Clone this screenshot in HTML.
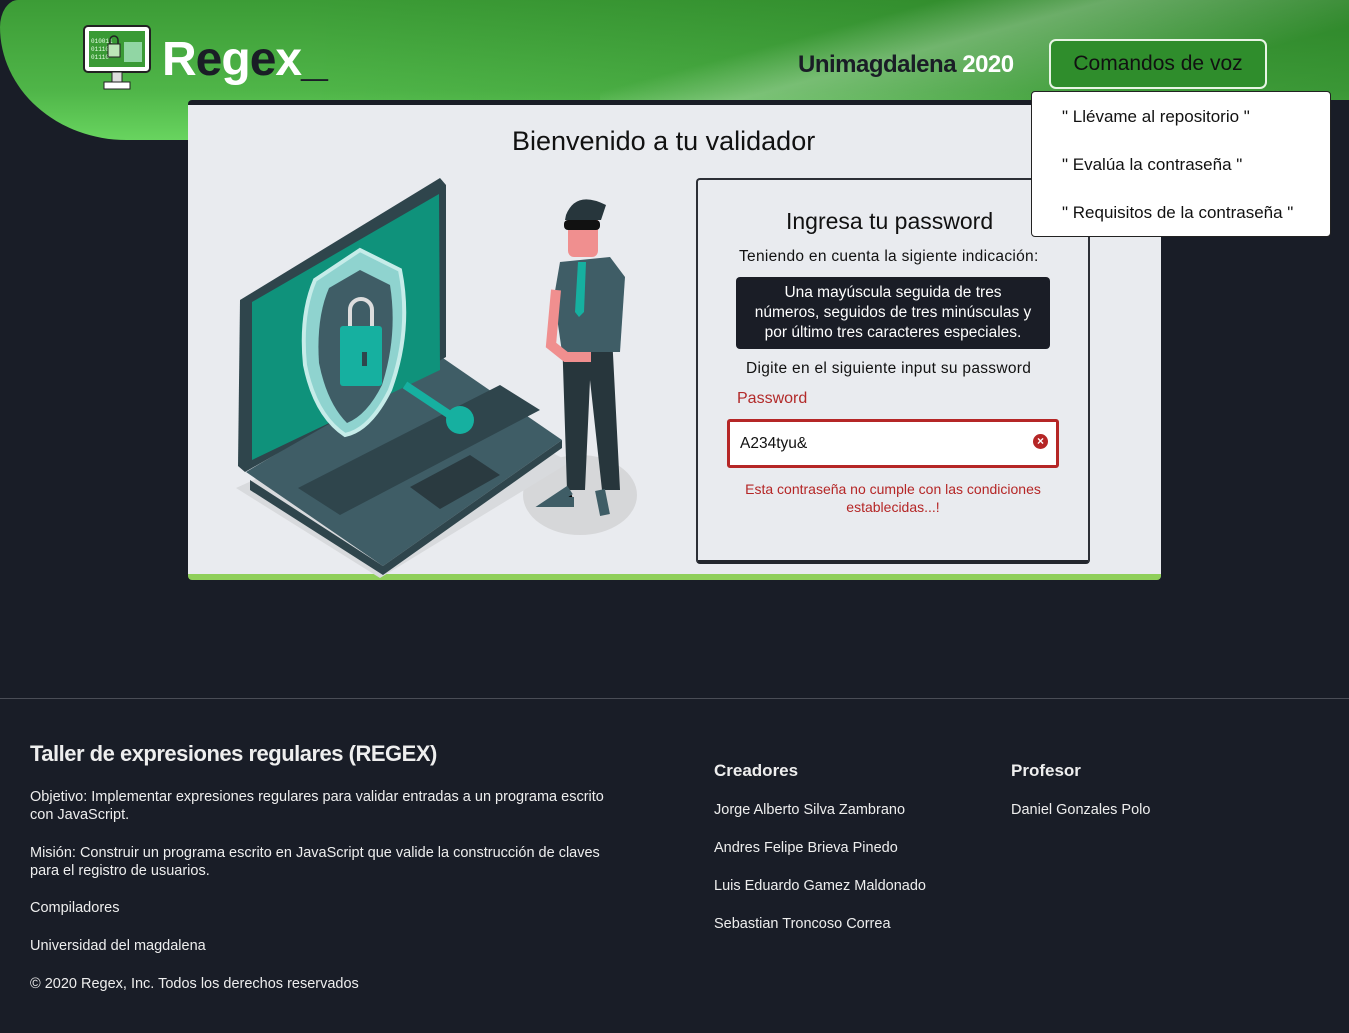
<!DOCTYPE html>
<html><head><meta charset="utf-8"><style>
*{margin:0;padding:0;box-sizing:border-box}
body{width:1349px;height:1033px;background:#191d27;font-family:"Liberation Sans",sans-serif;position:relative;overflow:hidden;color:#222}
.g{background:linear-gradient(90deg,rgba(10,70,10,0) 0,rgba(10,70,10,0) 300px,rgba(10,80,10,.3) 1349px),linear-gradient(180deg,#3c9c36 0,#4fb548 90px,#68d45f 140px);background-attachment:fixed}
.hdr{position:absolute;left:150px;top:0;width:1200px;height:100px}
.hdr2{position:absolute;left:0;top:0;width:420px;height:140px;border-bottom-left-radius:140px 125px;border-top-left-radius:20px 30px}
.streak{position:absolute;left:600px;top:0;width:760px;height:100px;background:linear-gradient(165deg,rgba(255,255,255,0) 30%,rgba(255,255,255,.28) 45%,rgba(255,255,255,0) 75%)}
.t{position:absolute;white-space:nowrap}
.card{position:absolute;left:188px;top:100px;width:973px;height:480px;background:#e9ebef;border-top:5px solid #1a1d26;border-bottom:6px solid #8fcf5a;border-radius:4px}
.inner{position:absolute;left:696px;top:178px;width:394px;height:386px;background:#e9ebef;border:2px solid #2c2f36;border-bottom:4px solid #23262d;border-radius:4px}
.menu{position:absolute;left:1031px;top:91px;width:300px;height:146px;background:#fff;border:1px solid #222;border-radius:4px}
.menu div{position:absolute;left:30px;font-size:17px;color:#111}
.btn{position:absolute;left:1049px;top:39px;width:218px;height:50px;border:2px solid #e8f5e5;border-radius:7px;background:#2f8d2c;font-size:21px;color:#111;text-align:center;line-height:46px}
.foot{position:absolute;left:0;top:698px;width:1349px;height:1px;background:#4a4d56}
.f{position:absolute;color:#eee;font-size:14.5px;white-space:nowrap}
</style></head><body>
<div class="hdr g"></div><div class="hdr2 g"></div><div class="streak"></div>
<svg style="position:absolute;left:82px;top:24px" width="72" height="68" viewBox="0 0 72 68">
<rect x="2" y="2" width="66" height="46" rx="4" fill="#fff" stroke="#222" stroke-width="2"/>
<rect x="7" y="7" width="56" height="36" fill="#3a9a35"/>
<text x="9" y="19" font-size="6" fill="#e8ffe8" font-family="Liberation Mono">010011</text>
<text x="9" y="27" font-size="6" fill="#e8ffe8" font-family="Liberation Mono">01110</text>
<text x="9" y="35" font-size="6" fill="#e8ffe8" font-family="Liberation Mono">01110</text>
<rect x="26" y="20" width="12" height="13" fill="#bde6b8" stroke="#222"/>
<path d="M28 20v-4a4 4 0 0 1 8 0v4" fill="none" stroke="#222" stroke-width="1.5"/>
<rect x="42" y="18" width="18" height="20" fill="#cfe" opacity=".6"/>
<path d="M30 48h10v10h-10z" fill="#ddd" stroke="#222"/><rect x="22" y="58" width="26" height="7" fill="#fff" stroke="#222"/>
</svg>
<div class="t" style="left:162px;top:32px;font-size:48px;font-weight:bold;color:#fff;letter-spacing:-1px">R<span style="color:#1a1d26">e</span>g<span style="color:#1a1d26">e</span>x<span style="color:#1a1d26">_</span></div>
<div class="t" style="left:798px;top:51px;font-size:24px;font-weight:bold;color:#fff;letter-spacing:-0.5px"><span style="color:#1a1d26">Unimagdalena</span> 2020</div>
<div class="card"></div>
<div class="t" style="left:512px;top:126px;font-size:27px;color:#111">Bienvenido a tu validador</div>
<svg style="position:absolute;left:230px;top:175px" width="420" height="405" viewBox="230 175 420 405">
<ellipse cx="580" cy="495" rx="57" ry="40" fill="#d6d7d9"/>
<polygon points="236,488 380,578 570,462 440,395" fill="#d8dadd"/>
<polygon points="246,472 440,356 562,440 383,566" fill="#3f5d66"/>
<polygon points="250,480 383,566 383,575 250,490" fill="#2f454c"/>
<polygon points="383,566 562,440 562,448 383,575" fill="#2f454c"/>
<polygon points="298,488 500,385 540,410 340,515" fill="#2f454c"/>
<polygon points="410,487 470,455 500,475 440,509" fill="#2a3a40"/>
<polygon points="240,300 440,178 446,185 446,357 245,472 238,466" fill="#2f454c"/>
<polygon points="252,302 439,194 440,370 252,460" fill="#0f927b"/>
<path d="M360 250 l40 20 q12 60 -10 120 q-20 40 -45 45 q-30 -20 -40 -70 q-5 -50 10 -85z" fill="#8fd3cf" stroke="#c6ece9" stroke-width="4"/>
<path d="M360 270 l30 15 q8 50 -8 100 q-15 30 -35 38 q-20 -20 -28 -60 q-3 -45 10 -75z" fill="#3f5d66"/>
<path d="M350 328v-18a11 11 0 0 1 22 0v18" fill="none" stroke="#ddd" stroke-width="4"/>
<rect x="340" y="326" width="42" height="60" rx="3" fill="#16b0a0"/>
<rect x="362" y="352" width="5" height="14" fill="#2f454c"/>
<path d="M405 385 l45 30" stroke="#16b0a0" stroke-width="8"/><circle cx="460" cy="420" r="14" fill="#16b0a0"/>
<path d="M562 335 l50 0 l8 155 l-18 0 l-12 -110 l-5 110 l-18 0z" fill="#27363c"/>
<path d="M560 262 l50 -5 l15 20 l-5 75 l-58 0 l-8 -55z" fill="#3f5d66"/>
<path d="M578 262 l8 0 l-2 50 l-5 5 l-4 -5z" fill="#16b0a0"/>
<rect x="568" y="212" width="30" height="45" rx="6" fill="#f08f8f"/>
<path d="M566 215 q10 -25 40 -10 l-5 15 l-36 0z" fill="#27363c"/>
<rect x="564" y="220" width="36" height="10" rx="4" fill="#111"/>
<path d="M556 290 l-5 55 l15 12 l25 0" fill="none" stroke="#f08f8f" stroke-width="10"/>
<path d="M570 490 l-18 12 l22 0 M600 490 l5 25" stroke="#3f5d66" stroke-width="10"/>
</svg>
<div class="inner"></div>
<div class="t" style="left:786px;top:208px;font-size:23px;color:#111">Ingresa tu password</div>
<div class="t" style="left:739px;top:248px;font-size:15.5px;color:#111;letter-spacing:.3px">Teniendo en cuenta la sigiente indicación:</div>
<div style="position:absolute;left:736px;top:277px;width:314px;height:72px;background:#1a1d26;border-radius:4px;color:#fff;font-size:15.5px;text-align:center;line-height:20px;padding-top:6px">Una mayúscula seguida de tres<br>números, seguidos de tres minúsculas y<br>por último tres caracteres especiales.</div>
<div class="t" style="left:746px;top:360px;font-size:15.5px;color:#111;letter-spacing:.3px">Digite en el siguiente input su password</div>
<div class="t" style="left:737px;top:390px;font-size:16px;color:#b22a2a">Password</div>
<div style="position:absolute;left:727px;top:419px;width:332px;height:49px;background:#fff;border:3px solid #b52626;border-radius:3px"></div>
<div class="t" style="left:740px;top:435px;font-size:15.5px;color:#111">A234tyu&amp;</div>
<div style="position:absolute;left:1033px;top:434px;width:15px;height:15px;border-radius:50%;background:#b52626;color:#fff;font-size:12px;line-height:15px;text-align:center;font-weight:bold">×</div>
<div style="position:absolute;left:727px;top:480px;width:332px;text-align:center;font-size:14px;color:#b52626;line-height:18px">Esta contraseña no cumple con las condiciones<br>establecidas...!</div>
<div class="btn">Comandos de voz</div>
<div class="menu"><div style="top:15px">" Llévame al repositorio "</div><div style="top:63px">" Evalúa la contraseña "</div><div style="top:111px">" Requisitos de la contraseña "</div></div>
<div class="foot"></div>
<div class="f" style="left:30px;top:741px;font-size:22px;font-weight:bold;letter-spacing:-0.5px">Taller de expresiones regulares (REGEX)</div>
<div class="f" style="left:30px;top:788px;line-height:18px">Objetivo: Implementar expresiones regulares para validar entradas a un programa escrito<br>con JavaScript.</div>
<div class="f" style="left:30px;top:844px;line-height:18px">Misión: Construir un programa escrito en JavaScript que valide la construcción de claves<br>para el registro de usuarios.</div>
<div class="f" style="left:30px;top:900px">Compiladores</div>
<div class="f" style="left:30px;top:938px">Universidad del magdalena</div>
<div class="f" style="left:30px;top:976px">© 2020 Regex, Inc. Todos los derechos reservados</div>
<div class="f" style="left:714px;top:761px;font-size:17px;font-weight:bold">Creadores</div>
<div class="f" style="left:714px;top:802px">Jorge Alberto Silva Zambrano</div>
<div class="f" style="left:714px;top:840px">Andres Felipe Brieva Pinedo</div>
<div class="f" style="left:714px;top:878px">Luis Eduardo Gamez Maldonado</div>
<div class="f" style="left:714px;top:916px">Sebastian Troncoso Correa</div>
<div class="f" style="left:1011px;top:761px;font-size:17px;font-weight:bold">Profesor</div>
<div class="f" style="left:1011px;top:802px">Daniel Gonzales Polo</div>
</body></html>
